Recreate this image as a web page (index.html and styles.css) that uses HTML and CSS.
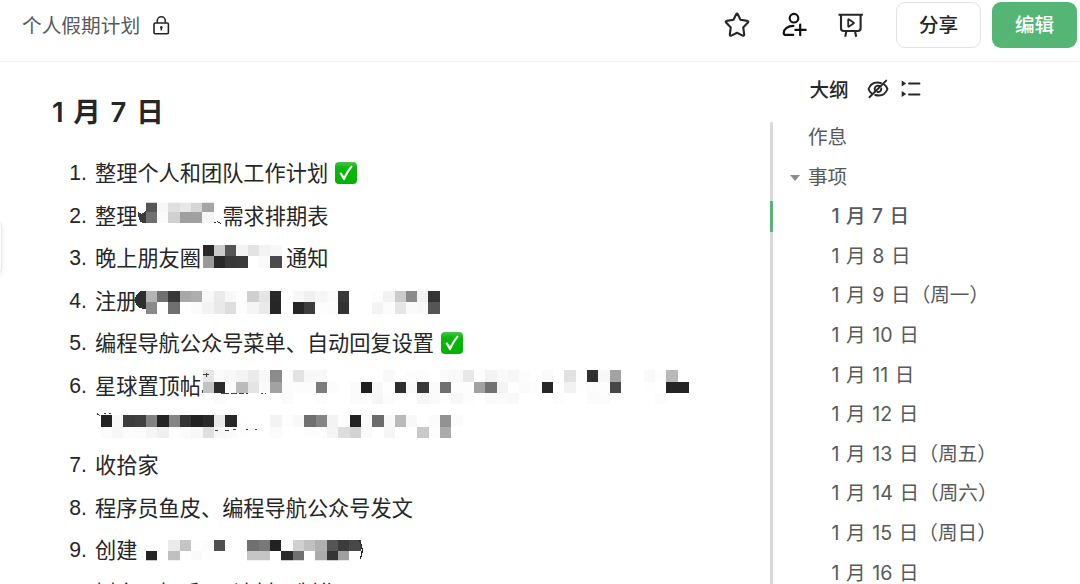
FILE: index.html
```html
<!DOCTYPE html>
<html lang="zh-CN">
<head>
    <meta charset="UTF-8">
    <meta name="viewport" content="width=device-width, initial-scale=1.0">
    <title>个人假期计划</title>
    <link rel="stylesheet" href="styles.css">
</head>
<body>

    <!-- Top Bar -->
    <header class="topbar">
        <div class="doc-title">
            <span>个人假期计划</span>
            <svg class="icon-lock" width="17" height="20" viewBox="0 0 17 20" fill="none" stroke="#262626" stroke-width="1.6">
                <rect x="1" y="8" width="14.4" height="10.8" rx="1.2"/>
                <path d="M4.3 7.8V5.8a4 4 0 0 1 8 0v2"/>
                <circle cx="8.3" cy="12.2" r="1.2" fill="#262626" stroke="none"/>
                <path d="M8.3 12.4v3"/>
            </svg>
        </div>
        <div class="actions">
            <svg class="icon" width="28" height="28" viewBox="0 0 28 28" fill="none" stroke="#262626" stroke-width="2.1" stroke-linejoin="round">
                <path d="M13.2 3.300Q14 1.900 14.800 3.300L17.500 8.700L24.300 9.900Q26 10.300 24.900 11.600L20.200 16.400L21.200 23.500Q21.200 25.200 19.600 24.600L14 21.700L8.400 24.600Q6.800 25.200 6.800 23.500L7.800 16.400L3.100 11.600Q2 10.300 3.700 9.900L10.500 8.700Z"/>
            </svg>
            <svg class="icon" width="28" height="28" viewBox="0 0 28 28" fill="none" stroke="#111" stroke-width="2.2" stroke-linecap="round">
                <circle cx="14" cy="7.200" r="4.300"/>
                <path d="M13.400 14.900C7.400 14.900 3.700 18.200 3.700 21.900Q3.700 23.900 5.800 23.900H13.200"/>
                <path d="M20.200 13.600V24.200M15.400 18.900H25.600"/>
            </svg>
            <svg class="icon" width="28" height="28" viewBox="0 0 28 28" fill="none" stroke="#262626" stroke-width="2.1">
                <path d="M1.500 3.700H25.900M4 3.800V17.300Q4 20 6.700 20H20.900Q23.600 20 23.600 17.300V3.800M9.400 20.100L8.200 25.800M18 20.100L19.200 25.800"/>
                <path d="M11.200 8.800Q11.200 7.900 12 8.400L16.500 11.500Q17.200 12 16.500 12.500L12 15.600Q11.200 16.100 11.200 15.200Z" stroke-width="1.800" stroke-linejoin="round"/>
            </svg>
            <button class="btn btn-share">分享</button>
            <button class="btn btn-edit">编辑</button>
        </div>
    </header>

    <div class="page">
        <!-- Document Body -->
        <main class="doc">
            <h2>1 月 7 日</h2>
            <ol class="tasks">
                <li>
                    <div class="line"><span>整理个人和团队工作计划</span>
                        <svg class="check" width="22" height="22" viewBox="0 0 22 22">
                            <defs>
                                <linearGradient id="green" x1="0" y1="0" x2="0" y2="1">
                                    <stop offset="0" stop-color="#4cc34c"/>
                                    <stop offset=".25" stop-color="#0cb80f"/>
                                    <stop offset="1" stop-color="#00b300"/>
                                </linearGradient>
                            </defs>
                            <rect width="22" height="22" rx="4" fill="url(#green)"/>
                            <path d="M4.500 11.300L6.300 10.200L9 14.300Q12 8 16.200 3.600L17.700 4.500Q13 10.500 9.500 18.200H8.500Z" fill="#fff"/>
                        </svg>
                    </div>
                </li>
                <li>
                    <div class="line"><span>整理</span><svg class="mosaic cut-top" data-width="85" data-x="8.7" data-y="3.6" data-cap="1"
                        data-rows="55 f7 df e8 d5 a5|70 fa d0 a0 a0 f5"></svg><span>需求排期表</span></div>
                </li>
                <li>
                    <div class="line"><span>晚上朋友圈</span><svg class="mosaic" data-width="85" data-x="1.5" data-y="6"
                        data-rows="28 cb 55 f3 e3 f3 f7|9a 28 38 3a ff fa 4a"></svg><span>通知</span></div>
                </li>
                <li>
                    <div class="line"><span>注册</span><svg class="mosaic" data-width="310" data-x="8.7" data-y="9" data-cap="2"
                        data-rows="b3 70 38 a8 ad f8 ea f8 fc cf e5 28 ff f8 f0 f6 fa 38 ff ff fd f2 cb 8b f2 35|8a ff 70 ff fb f3 e9 dd fc f5 ea 26 fe 26 3d fd fc 32 ff ff f4 fc e6 fa f8 55"></svg></div>
                </li>
                <li>
                    <div class="line"><span>编程导航公众号菜单、自动回复设置</span>
                        <svg class="check" width="22" height="22" viewBox="0 0 22 22">
                            <rect width="22" height="22" rx="4" fill="url(#green)"/>
                            <path d="M4.500 11.300L6.300 10.200L9 14.300Q12 8 16.200 3.600L17.700 4.500Q13 10.500 9.500 18.200H8.500Z" fill="#fff"/>
                        </svg>
                    </div>
                </li>
                <li>
                    <div class="line"><span>星球置顶帖</span><svg class="mosaic" data-width="490" data-x="1.5" data-y="3.2" data-cap="4"
                        data-rows="e6 fa f8 f3 eb f8 8b fd e3 f8 f8 ff ff ff ff ff f9 ff fc fd ff fa f9 e7 fd f3 fa f6 fc ff fa ff e1 fd 30 f8 a3 ff ff fa fe b9 ff|c2 2c fb bb e4 fa a2 fb fc fc 7c fc ff fb 20 f8 fe 2f f9 38 fb 70 fd fd a2 72 f4 ff fb fd 26 ff f2 fe fc fd 48 ff ff fe ff 24 24|ff fb ff ff ff ff ff fb ff ff fc ff ff fb fc f6 fc ff ff f6 fa fe f8 fd ff fa fb f9 ff ff ff fc ff ff fb fb ff ff ff ff fc ff ff"></svg></div>
                    <div class="line"><svg class="mosaic" data-width="362" data-x="5.8" data-y="11.4" data-cap="5"
                        data-rows="22 f8 3c 40 82 24 85 34 22 2a ea 28 fe ff ff f3 fd f8 70 85 f3 fd 22 fa 6c f8 b9 f8 ff fb 92 fb|fb f7 fd fb f5 f0 fe fb f7 e0 f8 fb fe ff ff fb ff ff fc fc f4 dd d2 fb ff f6 ff ff c9 fd ab ff"></svg></div>
                </li>
                <li><div class="line"><span>收拾家</span></div></li>
                <li><div class="line"><span>程序员鱼皮、编程导航公众号发文</span></div></li>
                <li>
                    <div class="line"><span>创建</span><svg class="mosaic cut-bottom" data-width="232" data-x="8.7" data-y="8.6" data-cap="3"
                        data-rows="fe ff ea c5 fe fc 50 ff ff 70 78 22 fb d0 c0 b0 55 3c 48|24 ff c0 ff fa fe ff ff ff c5 c5 ff 2c 70 fe ac 35 a0 fe"></svg></div>
                </li>
                <li class="plain"><div class="line"><span>树之、打手、、诗材面制作</span></div></li>
            </ol>
            <div class="drawer-handle"></div>
        </main>

        <!-- Outline -->
        <aside class="outline">
            <div class="outline-head">
                <strong>大纲</strong>
                <svg class="icon-eye" width="22" height="20" viewBox="0 0 22 20" fill="none" stroke="#262626" stroke-width="1.9" stroke-linecap="round">
                    <path d="M14 4Q4.600 1.800 1.500 10Q2.400 12.800 4.800 14.500M8.200 16Q17.400 18.200 20.500 10Q19.600 7.200 17.200 5.500"/>
                    <path d="M12.500 7Q8.500 5.800 7.700 9.500Q7.700 11 8.300 12M10.500 13Q14.200 13.200 14.300 9.500"/>
                    <path d="M2.400 18.200L19.200 1.600"/>
                </svg>
                <svg class="icon-list" width="20" height="20" viewBox="0 0 20 20" fill="#262626">
                    <path d="M.700 1.500L5.200 4.500L.700 7.500ZM.700 12L5.200 15L.700 18Z"/>
                    <path d="M8 4.500H18.500M8 15.500H18.500" stroke="#262626" stroke-width="1.800" stroke-linecap="round"/>
                </svg>
            </div>
            <ul class="toc">
                <li>作息</li>
                <li class="open">事项</li>
                <li class="sub active">1 月 7 日</li>
                <li class="sub">1 月 8 日</li>
                <li class="sub">1 月 9 日（周一）</li>
                <li class="sub">1 月 10 日</li>
                <li class="sub">1 月 11 日</li>
                <li class="sub">1 月 12 日</li>
                <li class="sub">1 月 13 日（周五）</li>
                <li class="sub">1 月 14 日（周六）</li>
                <li class="sub">1 月 15 日（周日）</li>
                <li class="sub">1 月 16 日</li>
            </ul>
        </aside>
    </div>

    <script>
        const CELL = 11.31;
        const LINE = 37;

        // Ends of letters and strokes that stick out of the masked areas
        const CAPS = {
            1: '<path d="M9 8L17 5.500V26H6Q1 25 1 15Q5 19 9 14Z" fill="#3a3a3a"/><path d="M77 25.500h1.500M80.500 24.500q1 2 3.500 1.500" stroke="#262626" fill="none"/>',
            2: '<path d="M9 9.200H4Q-3 12 -2 20Q0 27 9 27Z" fill="#2e2e2e"/>',
            3: '<path d="M222 9Q228 18 223 28" stroke="#262626" fill="none" stroke-width="1.200"/>',
            4: '<path d="M2 7.500H8M5 5.500V9.500M1 22.500V26M20 26.800H28M30 26.800H36M38 26.800H43M45 26.800H47M60 26.500H62M64 26.800H65" stroke="#444" fill="none"/>',
            5: '<path d="M2 9.500L5 12M9 9.500H11M14 9.500H16M120 26.500H123M130 26H134M138 25.500H141M151 25.500H153M160 25.500H162" stroke="#444" fill="none"/>'
        };

        // Draw the grey squares over the private words
        document.querySelectorAll('.mosaic').forEach(function(svg) {
            const x = Number(svg.dataset.x);
            const y = Number(svg.dataset.y);
            let shapes = '';

            svg.dataset.rows.split('|').forEach(function(row, r) {
                row.split(' ').forEach(function(grey, c) {
                    if (grey === 'ff') return;
                    shapes += `<rect x="${x + c * CELL}" y="${y + r * CELL}" width="${CELL}" height="${CELL}" fill="#${grey + grey + grey}"/>`;
                });
            });

            // The dark caps go under the squares, the thin strokes over them
            const cap = CAPS[svg.dataset.cap] || '';
            const onTop = svg.dataset.cap > 2;

            svg.setAttribute('width', svg.dataset.width);
            svg.setAttribute('height', LINE);
            svg.innerHTML = onTop ? shapes + cap : cap + shapes;
        });
    </script>
</body>
</html>
```
FILE: styles.css
```css
/* Page */
* {
    box-sizing: border-box;
}

body {
    margin: 0;
    height: 584px;
    overflow: hidden;
    background-color: #fff;
    color: #262626;
    font-family: Inter, "Noto Sans CJK SC", sans-serif;
}

/* Top bar */
.topbar {
    display: flex;
    justify-content: space-between;
    height: 62px;
    padding: 2px 3px 0 22px;
    border-bottom: 1px solid #f2f2f2;
}

.doc-title {
    display: flex;
    align-items: center;
    height: 46px;
    font-size: 19.7px;
    color: #585a5a;
}

.doc-title span {
    padding-bottom: 2px;
}

.icon-lock {
    margin-left: 13px;
}

.actions {
    display: flex;
    align-items: center;
    height: 46px;
}

.icon {
    margin-right: 29px;
}

.btn {
    width: 85px;
    height: 46px;
    padding: 0 0 3px;
    border-radius: 9px;
    font-family: inherit;
    font-size: 19.6px;
    font-weight: 500;
}

.btn-share {
    margin-left: 2px;
    border: 1.5px solid #e2e2e2;
    background-color: #fff;
    color: #262626;
}

.btn-edit {
    margin-left: 11px;
    border: none;
    background-color: #54b574;
    color: #fff;
}

/* Document */
.page {
    display: flex;
    height: 522px;
}

.doc {
    position: relative;
    width: 770px;
    padding: 30px 0 0 52px;
}

.doc h2 {
    margin: 0;
    height: 62.2px;
    line-height: 41px;
    font-size: 27.5px;
    font-weight: 600;
    word-spacing: 2.8px;
}

.tasks {
    margin: 0;
    padding: 0;
    list-style: none;
    counter-reset: task;
    font-size: 21.2px;
}

.tasks li {
    position: relative;
    margin-bottom: 5.5px;
    padding-left: 43px;
    counter-increment: task;
}

.tasks li::before {
    content: counter(task) ".";
    position: absolute;
    left: 0;
    width: 35px;
    line-height: 38px;
    text-align: right;
    font-family: "Liberation Sans", sans-serif;
}

.tasks li.plain::before {
    content: none;
}

.line {
    display: flex;
    align-items: center;
    height: 37px;
    white-space: nowrap;
}

.line span {
    padding-bottom: 2px;
}

.check {
    margin-left: 7px;
}

.mosaic {
    flex: none;
    overflow: visible;
    shape-rendering: crispEdges;
}

.cut-top {
    clip-path: inset(6px 0 0 0);
}

.cut-bottom {
    clip-path: inset(0 0 8px 0);
}

/* Edge of the collapsed side drawer */
.drawer-handle {
    position: absolute;
    left: -20px;
    top: 160px;
    width: 22px;
    height: 51px;
    border: 1px solid #e8e8e8;
    border-radius: 4px;
    box-shadow: 0 2px 6px rgba(0, 0, 0, 0.08);
}

/* Outline */
.outline {
    width: 310px;
}

.outline-head {
    display: flex;
    align-items: center;
    height: 60px;
    padding: 0 0 6px 39.5px;
    font-size: 19.6px;
}

.outline-head strong {
    padding-bottom: 2px;
    font-weight: 500;
}

.icon-eye {
    margin-left: 18px;
}

.icon-list {
    margin-left: 12.5px;
}

.toc {
    margin: 0;
    padding: 0;
    list-style: none;
    border-left: 3px solid #d9d9d9;
    font-size: 19.6px;
    color: #585a5a;
    word-spacing: 1.1px;
}

.toc li {
    position: relative;
    height: 39.6px;
    padding-left: 35px;
    line-height: 31.4px;
    white-space: nowrap;
}

.toc .sub {
    padding-left: 58.5px;
}

.toc .active {
    font-weight: 500;
}

.toc .active::before {
    content: "";
    position: absolute;
    left: -3px;
    top: 0;
    width: 3px;
    height: 31px;
    background-color: #54b574;
}

.toc .open::before {
    content: "";
    position: absolute;
    left: 17px;
    top: 13px;
    border: 5.5px solid transparent;
    border-top: 6px solid #8a8f8d;
    border-bottom: none;
}
```
